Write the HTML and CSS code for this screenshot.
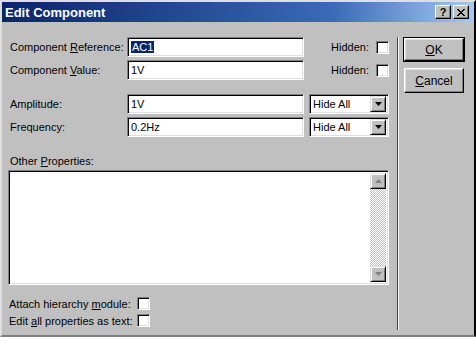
FILE: index.html
```html
<!DOCTYPE html>
<html lang="en">
<head>
    <meta charset="UTF-8">
    <meta name="viewport" content="width=device-width, initial-scale=1.0">
    <title>Edit Component</title>
    <link rel="stylesheet" href="styles.css">
</head>
<body>
    <div class="window">
        <div class="titlebar">
            <span class="title">Edit Component</span>
            <div class="title-btns">
                <span class="tbtn help">?</span>
                <span class="tbtn close">
                    <svg width="8" height="7" viewBox="0 0 8 7"><path d="M0 0h2v1h1v1h2v-1h1v-1h2v1h-1v1h-1v1h-1v1h1v1h1v1h1v1h-2v-1h-1v-1h-2v1h-1v1h-2v-1h1v-1h1v-1h1v-1h-1v-1h-1v-1h-1z" fill="#000"/></svg>
                </span>
            </div>
        </div>
        <div class="client">
            <div class="main">
                <div class="row">
                    <label class="lbl">Component <u>R</u>eference:</label>
                    <div class="field"><span class="selected">AC1</span></div>
                    <div class="hidden-opt"><span>Hidden:</span><span class="check"></span></div>
                </div>
                <div class="row row-tight">
                    <label class="lbl">Component <u>V</u>alue:</label>
                    <div class="field">1V</div>
                    <div class="hidden-opt"><span>Hidden:</span><span class="check"></span></div>
                </div>
                <div class="row row-wide">
                    <label class="lbl">Amplitude:</label>
                    <div class="field">1V</div>
                    <div class="combo">
                        <span class="combo-text">Hide All</span>
                        <span class="drop"><svg width="7" height="4" viewBox="0 0 7 4"><path d="M0 0h7l-3.5 4z" fill="#000"/></svg></span>
                    </div>
                </div>
                <div class="row row-tight">
                    <label class="lbl">Frequency:</label>
                    <div class="field">0.2Hz</div>
                    <div class="combo">
                        <span class="combo-text">Hide All</span>
                        <span class="drop"><svg width="7" height="4" viewBox="0 0 7 4"><path d="M0 0h7l-3.5 4z" fill="#000"/></svg></span>
                    </div>
                </div>

                <div class="props-label">Other <u>P</u>roperties:</div>
                <div class="memo">
                    <div class="memo-text"></div>
                    <div class="scrollbar">
                        <span class="sb-btn"><svg width="7" height="4" viewBox="0 0 7 4"><path d="M3.5 0l3.5 4h-7z" fill="#808080"/></svg></span>
                        <span class="sb-track"></span>
                        <span class="sb-btn"><svg width="7" height="4" viewBox="0 0 7 4"><path d="M0 0h7l-3.5 4z" fill="#808080"/></svg></span>
                    </div>
                </div>

                <div class="opts">
                    <div class="opt"><span class="opt-label">Attach hierarchy <u>m</u>odule:</span><span class="check"></span></div>
                    <div class="opt"><span class="opt-label">Edit <u>a</u>ll properties as text:</span><span class="check"></span></div>
                </div>
            </div>
            <div class="divider"></div>
            <div class="actions">
                <div class="default-wrap"><button class="btn"><u>O</u>K</button></div>
                <button class="btn cancel"><u>C</u>ancel</button>
            </div>
        </div>
    </div>
</body>
</html>
```

FILE: styles.css
```css
body {
    margin: 0;
    background-color: #c0c0c0;
    font-family: "Liberation Sans", Arial, sans-serif;
    font-size: 11px;
    color: #000;
}
.window {
    width: 476px;
    height: 337px;
    box-sizing: border-box;
    background-color: #c0c0c0;
    border: 2px solid;
    border-color: #dfdfdf #000 #808080 #dfdfdf;
    display: flex;
    flex-direction: column;
}
.titlebar {
    height: 20px;
    margin-right: 0;
    padding: 0 5px 0 3px;
    display: flex;
    align-items: center;
    justify-content: space-between;
    background: linear-gradient(to right, #0a246a, #3a6ab8 70%, #a6caf0);
}
.title {
    color: #fff;
    font-weight: bold;
    font-size: 13px;
}
.title-btns {
    display: flex;
    gap: 2px;
}
.tbtn {
    width: 16px;
    height: 14px;
    box-sizing: border-box;
    background-color: #c0c0c0;
    border: 1px solid;
    border-color: #fff #000 #000 #fff;
    box-shadow: inset -1px -1px #808080;
    display: flex;
    align-items: center;
    justify-content: center;
}
.help {
    font-weight: bold;
    font-size: 11px;
    line-height: 1;
}
.client {
    flex: 1;
    display: flex;
}
.main {
    width: 395px;
    box-sizing: border-box;
    padding: 15px 8px 0 6px;
}
.row {
    height: 20px;
    display: flex;
    align-items: center;
}
.row-tight {
    margin-top: 3px;
}
.row-wide {
    margin-top: 14px;
}
.lbl {
    width: 117px;
    margin-left: 2px;
}
.field, .memo, .combo {
    box-sizing: border-box;
    background-color: #fff;
    border: 1px solid;
    border-color: #808080 #fff #fff #808080;
    box-shadow: inset 1px 1px #000, inset -1px -1px #dfdfdf;
}
.field {
    width: 177px;
    height: 20px;
    padding: 0 3px;
    display: flex;
    align-items: center;
}
.selected {
    background-color: #0a246a;
    color: #fff;
    padding: 0 1px;
}
.hidden-opt {
    flex: 1;
    display: flex;
    justify-content: flex-end;
    align-items: center;
    gap: 7px;
}
.check {
    width: 13px;
    height: 13px;
    box-sizing: border-box;
    background-color: #fff;
    border: 1px solid;
    border-color: #808080 #fff #fff #808080;
    box-shadow: inset 1px 1px #000, inset -1px -1px #dfdfdf;
}
.combo {
    width: 80px;
    height: 20px;
    margin-left: 5px;
    padding: 2px 2px 2px 3px;
    display: flex;
    align-items: center;
    justify-content: space-between;
}
.drop, .sb-btn {
    width: 16px;
    height: 16px;
    box-sizing: border-box;
    background-color: #c0c0c0;
    border: 1px solid;
    border-color: #dfdfdf #000 #000 #dfdfdf;
    box-shadow: inset 1px 1px #fff, inset -1px -1px #808080;
    display: flex;
    align-items: center;
    justify-content: center;
}
.props-label {
    margin: 18px 0 0 2px;
    line-height: 13px;
}
.memo {
    height: 115px;
    margin-top: 2px;
    padding: 2px;
    display: flex;
}
.memo-text {
    flex: 1;
}
.scrollbar {
    width: 16px;
    display: flex;
    flex-direction: column;
}
.sb-track {
    flex: 1;
    background: repeating-conic-gradient(#fff 0 25%, #c0c0c0 0 50%) 0 0 / 2px 2px;
}
.opts {
    margin-top: 12px;
    display: flex;
    flex-direction: column;
    gap: 4px;
}
.opt {
    height: 13px;
    display: flex;
    align-items: center;
}
.opt-label {
    width: 128px;
    margin-left: 1px;
}
.divider {
    width: 1px;
    margin: 15px 0 5px;
    border-right: 1px solid #fff;
    background-color: #404040;
}
.actions {
    padding: 15px 0 0 4px;
    display: flex;
    flex-direction: column;
    align-items: flex-start;
}
.default-wrap {
    border: 1px solid #000;
    display: flex;
}
.btn {
    width: 60px;
    height: 23px;
    padding: 0;
    font-family: "Liberation Sans", Arial, sans-serif;
    font-size: 12px;
    color: #000;
    background-color: #c0c0c0;
    border: 1px solid;
    border-color: #fff #000 #000 #fff;
    box-shadow: inset -1px -1px #808080, inset 1px 1px #dfdfdf;
}
.cancel {
    margin: 6px 0 0 1px;
    height: 25px;
}
```
